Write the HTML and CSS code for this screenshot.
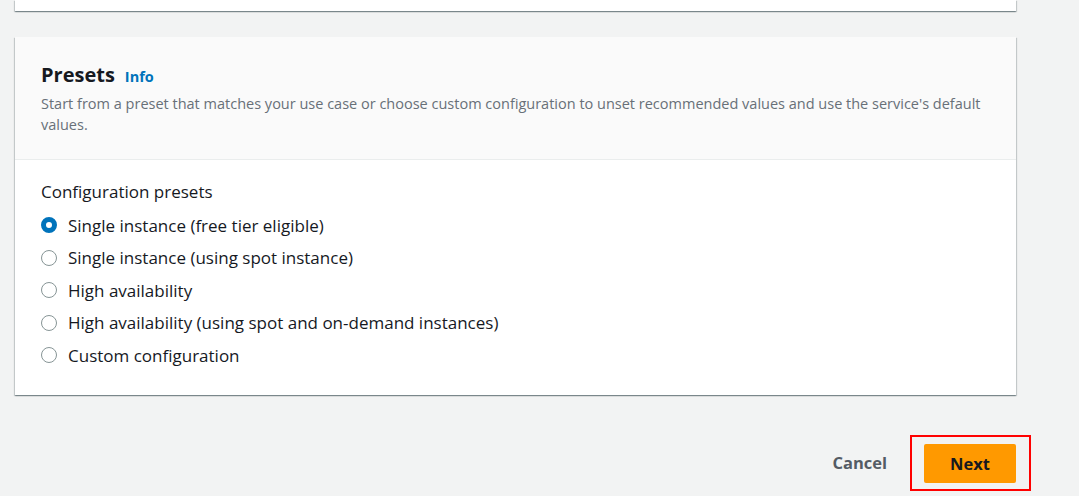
FILE: index.html
```html
<!DOCTYPE html>
<html>
<head>
<meta charset="utf-8">
<link rel="stylesheet" href="styles.css">
</head>
<body>
<div class="page">
  <div class="card card-top"></div>
  <div class="card">
    <div class="card-header">
      <div class="title-row">
        <h2 class="title">Presets</h2>
        <a class="info" href="#">Info</a>
      </div>
      <p class="desc">Start from a preset that matches your use case or choose custom configuration to unset recommended values and use the service's default values.</p>
    </div>
    <div class="card-body">
      <div class="label">Configuration presets</div>
      <div class="radios">
        <label class="radio"><span class="dot checked"></span><span>Single instance (free tier eligible)</span></label>
        <label class="radio"><span class="dot"></span><span>Single instance (using spot instance)</span></label>
        <label class="radio"><span class="dot"></span><span>High availability</span></label>
        <label class="radio"><span class="dot"></span><span>High availability (using spot and on-demand instances)</span></label>
        <label class="radio"><span class="dot"></span><span>Custom configuration</span></label>
      </div>
    </div>
  </div>
  <div class="actions">
    <button class="btn-cancel">Cancel</button>
    <div class="highlight"><button class="btn-next">Next</button></div>
  </div>
</div>
</body>
</html>
```

FILE: styles.css
```css
html, body {
  margin: 0;
  padding: 0;
  background: #f2f3f3;
  font-family: "Open Sans", "Noto Sans", sans-serif;
  color: #16191f;
}
.page {
  width: 1001px;
  padding-left: 15px;
}
.card {
  background: #fff;
  box-shadow: 0 1px 1px 0 rgba(0, 28, 36, 0.3), 1px 1px 1px 0 rgba(0, 28, 36, 0.15), -1px 1px 1px 0 rgba(0, 28, 36, 0.15);
}
.card-top {
  height: 11px;
  margin-bottom: 26px;
}
.card-header {
  background: #fafafa;
  border-bottom: 1px solid #eaeded;
  padding: 25px 26px 24px;
}
.title-row {
  display: flex;
  align-items: baseline;
  gap: 10px;
}
.title {
  margin: 0;
  font-size: 20px;
  line-height: 26px;
  font-weight: 700;
}
.info {
  font-size: 14.5px;
  font-weight: 700;
  color: #0073bb;
  text-decoration: none;
}
.desc {
  margin: 5px 0 0;
  font-size: 14.5px;
  line-height: 21px;
  color: #687078;
}
.card-body {
  padding: 20px 26px 23px;
}
.label {
  font-size: 17px;
  line-height: 24px;
}
.radios {
  display: flex;
  flex-direction: column;
  margin-top: 5px;
}
.radio {
  display: flex;
  align-items: center;
  gap: 11px;
  height: 32.5px;
  font-size: 17px;
}
.dot {
  width: 14px;
  height: 14px;
  border: 1px solid #879596;
  border-radius: 50%;
  box-sizing: content-box;
  flex: none;
}
.dot.checked {
  width: 6px;
  height: 6px;
  border: 5px solid #0073bb;
}
.actions {
  display: flex;
  justify-content: flex-end;
  align-items: center;
  margin-top: 40px;
  gap: 23px;
  margin-right: -15px;
}
.btn-cancel {
  background: none;
  border: 0;
  font-family: inherit;
  font-size: 16.5px;
  font-weight: 700;
  color: #545b64;
  padding: 0;
}
.highlight {
  border: 2px solid #ff0000;
  padding: 7px 13px 6px 12px;
}
.btn-next {
  display: block;
  width: 92px;
  height: 39px;
  background: #ff9900;
  border: 0;
  border-radius: 2px;
  font-family: inherit;
  font-size: 16.5px;
  font-weight: 700;
  color: #16191f;
}
```
